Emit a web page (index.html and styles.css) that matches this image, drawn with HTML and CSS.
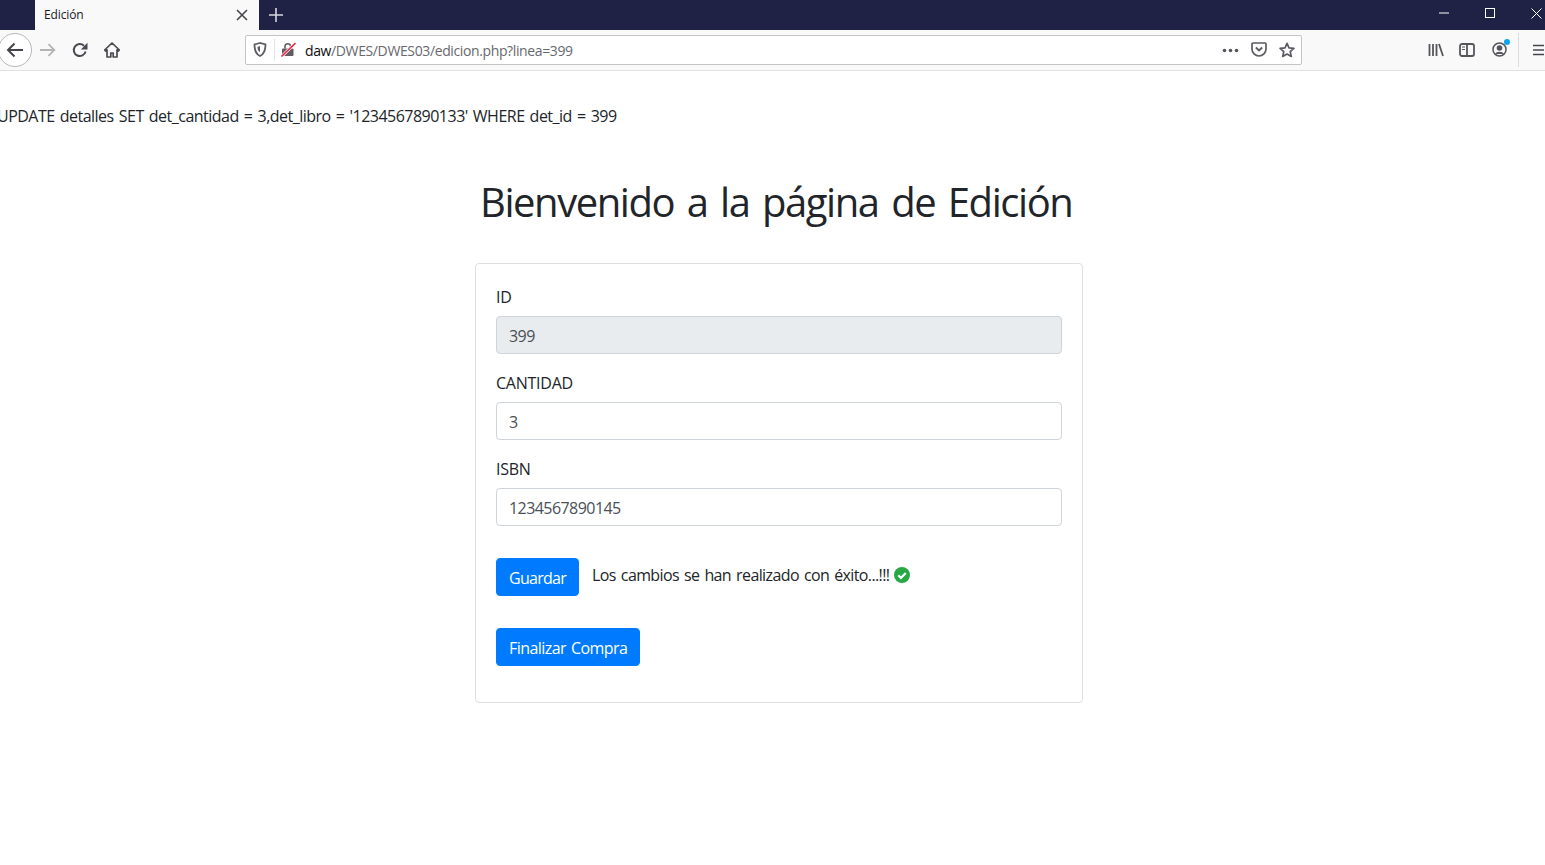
FILE: index.html
```html
<!DOCTYPE html>
<html lang="es">
<head>
<meta charset="utf-8">
<title>Edición</title>
<link rel="stylesheet" href="styles.css">
</head>
<body>
<header class="browser">
  <div class="tabbar">
    <div class="tab-spacer"></div>
    <div class="tab">
      <span class="tab-title">Edición</span>
      <svg class="tab-close" width="12" height="12" viewBox="0 0 12 12"><path d="M1 1l10 10M11 1L1 11" stroke="#45454d" stroke-width="1.6" fill="none"/></svg>
    </div>
    <svg class="new-tab" width="16" height="16" viewBox="0 0 16 16"><path d="M8 1v14M1 8h14" stroke="#d6d7de" stroke-width="1.6" fill="none"/></svg>
    <div class="win-controls">
      <svg width="10" height="10" viewBox="0 0 10 10"><path d="M0 5h10" stroke="#fff" fill="none"/></svg>
      <svg width="10" height="10" viewBox="0 0 10 10"><rect x=".5" y=".5" width="9" height="9" stroke="#fff" fill="none"/></svg>
      <svg width="11" height="11" viewBox="0 0 11 11"><path d="M.5.5l10 10M10.5.5l-10 10" stroke="#fff" fill="none"/></svg>
    </div>
  </div>
  <div class="toolbar">
    <div class="back-btn">
      <svg width="18" height="16" viewBox="0 0 18 16"><path d="M17 8H2M8.500 1.500L2 8l6.500 6.500" stroke="#45454d" stroke-width="2" fill="none"/></svg>
    </div>
    <svg class="tool forward" width="16" height="14" viewBox="0 0 16 14"><path d="M0 7h14M8.500 1.200L14.300 7l-5.800 5.800" stroke="#b4b4b6" stroke-width="1.800" fill="none"/></svg>
    <svg class="tool reload" width="16" height="16" viewBox="0 0 16 16"><path d="M13.600 9.500A6 6 0 1 1 12 3.800" stroke="#4a4a50" stroke-width="2" fill="none"/><path d="M15.500 .8v6.700H8.800z" fill="#4a4a50"/></svg>
    <svg class="tool home" width="16" height="16" viewBox="0 0 16 16"><path d="M8 1L.6 8l1 1L3 7.800V15h3.800v-4h2.400v4H13V7.800L14.400 9l1-1z" fill="none" stroke="#4a4a50" stroke-width="1.700" stroke-linejoin="round"/></svg>
    <div class="urlbar">
      <svg class="shield" width="14" height="15" viewBox="0 0 14 15"><path d="M7 1L1.500 2.500c0 5.500 1 9.500 5.500 11.500 4.500-2 5.500-6 5.500-11.500z" fill="none" stroke="#5b5b62" stroke-width="1.800"/><path d="M7 4L4.500 5c0 2.500.5 4 2.500 5z" fill="#5b5b62"/></svg>
      <span class="url-sep"></span>
      <svg class="lock" width="15" height="15" viewBox="0 0 15 15"><rect x="1" y="6.500" width="11.500" height="7.500" rx="1" fill="#5c5c61"/><path d="M4 6.500V4.500a2.800 2.800 0 0 1 5.600 0v2" stroke="#5c5c61" stroke-width="1.600" fill="none"/><path d="M.5 14.500L14.500 1" stroke="#ffffff" stroke-width="3"/><path d="M.5 14.500L14.500 1" stroke="#ee2a4f" stroke-width="1.600"/></svg>
      <span class="url"><span class="url-host">daw</span>/DWES/DWES03/edicion.php?linea=399</span>
      <svg class="url-dots" width="17" height="5" viewBox="0 0 17 5"><circle cx="2.500" cy="2.500" r="1.800" fill="#55555b"/><circle cx="8.500" cy="2.500" r="1.800" fill="#55555b"/><circle cx="14.500" cy="2.500" r="1.800" fill="#55555b"/></svg>
      <svg class="pocket" width="16" height="15" viewBox="0 0 16 15"><path d="M2 1h12a1 1 0 0 1 1 1v5a7 7 0 0 1-14 0V2a1 1 0 0 1 1-1z" fill="none" stroke="#5b5b62" stroke-width="1.700"/><path d="M4.800 5.500L8 8.500l3.200-3" stroke="#5b5b62" stroke-width="1.800" fill="none"/></svg>
      <svg class="star" width="16" height="16" viewBox="0 0 16 16"><path d="M8 1.300l2 4.500 4.900.5-3.700 3.300 1.100 4.800L8 12l-4.300 2.400 1.100-4.800L1.100 6.300 6 5.800z" fill="none" stroke="#5b5b62" stroke-width="1.700" stroke-linejoin="round"/></svg>
    </div>
    <div class="tool-right">
      <svg width="16" height="14" viewBox="0 0 16 14"><path d="M1.500 1v12M5 1v12M8.500 1v12M11 1l4 12" stroke="#55555b" stroke-width="1.800" fill="none"/></svg>
      <svg class="sidebar" width="16" height="14" viewBox="0 0 16 14"><rect x="1" y="1" width="14" height="12" rx="2" fill="none" stroke="#55555b" stroke-width="1.800"/><path d="M8 1v12" stroke="#55555b" stroke-width="1.800"/><path d="M3 4h3M3 6.500h3" stroke="#55555b"/></svg>
      <span class="account">
        <svg width="15" height="15" viewBox="0 0 15 15"><circle cx="7.500" cy="7.500" r="6.500" fill="none" stroke="#55555b" stroke-width="1.500"/><circle cx="7.500" cy="6" r="2.800" fill="#55555b"/><path d="M3 12a4.800 3.500 0 0 1 9 0z" fill="#55555b"/></svg>
        <i class="dot"></i>
      </span>
      <span class="tool-sep"></span>
      <svg class="menu" width="11" height="12" viewBox="0 0 11 12"><path d="M0 1.500h11M0 6h11M0 10.500h11" stroke="#45454d" stroke-width="1.600"/></svg>
    </div>
  </div>
</header>
<main class="page">
  <p class="sql">UPDATE detalles SET det_cantidad = 3,det_libro = '1234567890133' WHERE det_id = 399</p>
  <h1 class="title">Bienvenido a la página de Edición</h1>
  <form class="card">
    <label class="label" for="f-id">ID</label>
    <input class="input input-disabled" id="f-id" value="399" disabled>
    <label class="label" for="f-cant">CANTIDAD</label>
    <input class="input" id="f-cant" value="3">
    <label class="label" for="f-isbn">ISBN</label>
    <input class="input" id="f-isbn" value="1234567890145">
    <div class="save-row">
      <button class="btn btn-save" type="button">Guardar</button>
      <span class="msg">Los cambios se han realizado con éxito...!!!</span>
      <svg class="ok" width="16" height="16" viewBox="0 0 16 16"><circle cx="8" cy="8" r="8" fill="#28a745"/><path d="M4.300 8.300l2.600 2.600 4.900-5" stroke="#fff" stroke-width="2.200" fill="none"/></svg>
    </div>
    <div class="finish-row"><button class="btn" type="button">Finalizar Compra</button></div>
  </form>
</main>
</body>
</html>
```
FILE: styles.css
```css
* { box-sizing: border-box; }
html, body { margin: 0; padding: 0; }
body {
  height: 865px;
  overflow: hidden;
  background: #fff;
  color: #212529;
  font-family: "Open Sans", "Noto Sans", sans-serif;
  font-size: 16px;
  line-height: 24px;
}
.browser { height: 71px; }
.tabbar {
  display: flex;
  align-items: center;
  height: 30px;
  background: #1f2244;
}
.tab-spacer { width: 35px; }
.tab {
  display: flex;
  align-items: center;
  justify-content: space-between;
  width: 224px;
  height: 30px;
  padding: 0 11px 0 9px;
  background: #f9f9fa;
}
.tab-title { font-size: 12px; color: #18181a; letter-spacing: -0.01em; }
.new-tab { margin-left: 9px; }
.win-controls {
  display: flex;
  align-items: center;
  gap: 36px;
  margin-left: auto;
  margin-right: 3px;
  margin-top: -4px;
}
.toolbar {
  position: relative;
  display: flex;
  align-items: center;
  height: 41px;
  padding-bottom: 1px;
  background: #f9f9fa;
  border-bottom: 1px solid #e1e1e2;
}
.back-btn {
  display: flex;
  align-items: center;
  justify-content: center;
  flex: none;
  width: 34px;
  height: 34px;
  margin-left: -2px;
  border: 1px solid #b8b8ba;
  border-radius: 50%;
  background: #fff;
}
.forward { margin-left: 8px; }
.reload { margin-left: 16px; }
.home { margin-left: 16px; }
.urlbar {
  display: flex;
  align-items: center;
  width: 1057px;
  height: 30px;
  margin-left: 125px;
  border: 1px solid #c4c4c6;
  border-radius: 2px;
  background: #fff;
}
.shield { margin-left: 7px; }
.url-sep { width: 1px; height: 22px; margin-left: 7px; background: #e4e4e5; }
.lock { margin-left: 6px; }
.url {
  margin-left: 9px;
  padding-top: 2px;
  font-size: 14px;
  letter-spacing: -0.027em;
  color: #68686e;
}
.url-host { color: #0c0c0d; }
.url-dots { margin: 1px 0 0 auto; }
.pocket { margin-left: 12px; }
.star { margin-left: 12px; margin-right: 6px; }
.tool-right {
  display: flex;
  align-items: center;
  margin-left: 126px;
  gap: 16px;
}
.sidebar { margin-left: -1px; }
.account { position: relative; display: flex; margin-left: 1px; }
.dot {
  position: absolute;
  top: -3px;
  right: -3px;
  width: 6px;
  height: 6px;
  border-radius: 50%;
  background: #0ea5f0;
}
.tool-sep { width: 1px; height: 34px; margin-left: -5px; background: #dcdcdd; }
.menu { flex: none; margin-left: -2px; }
.page { display: flex; flex-direction: column; }
.sql {
  margin: 33px 0 0 -3px;
  letter-spacing: -0.032em;
  word-spacing: 0.09em;
  white-space: nowrap;
}
.title {
  margin: 50px 0 0;
  padding-left: 480px;
  font-size: 40px;
  font-weight: 400;
  line-height: 48px;
  letter-spacing: -0.036em;
  word-spacing: 0.09em;
  white-space: nowrap;
}
.card {
  display: flex;
  flex-direction: column;
  align-items: flex-start;
  width: 608px;
  height: 440px;
  margin: 37px 0 0 475px;
  padding: 20px;
  border: 1px solid #dfdfdf;
  border-radius: 4px;
}
.label {
  padding-top: 1px;
  margin-bottom: 7px;
  letter-spacing: -0.015em;
}
.input {
  width: 566px;
  height: 38px;
  margin-bottom: 16px;
  padding: 7px 12px 5px;
  border: 1px solid #ced4da;
  border-radius: 4px;
  background: #fff;
  color: #495057;
  font: inherit;
  letter-spacing: -0.035em;
}
.input-disabled { background: #e9ecef; }
.save-row {
  display: flex;
  align-items: flex-start;
  margin-top: 16px;
}
.btn {
  height: 38px;
  padding: 7px 12px 5px;
  border: 1px solid #007bff;
  border-radius: 4px;
  background: #007bff;
  color: #fff;
  font: inherit;
  letter-spacing: -0.035em;
  word-spacing: 0.09em;
  white-space: nowrap;
}
.btn-save { letter-spacing: -0.045em; }
.msg {
  margin: 5px 0 0 13px;
  letter-spacing: -0.038em;
  word-spacing: 0.09em;
}
.ok { margin: 9px 0 0 5px; }
.finish-row { margin-top: 32px; }
```
